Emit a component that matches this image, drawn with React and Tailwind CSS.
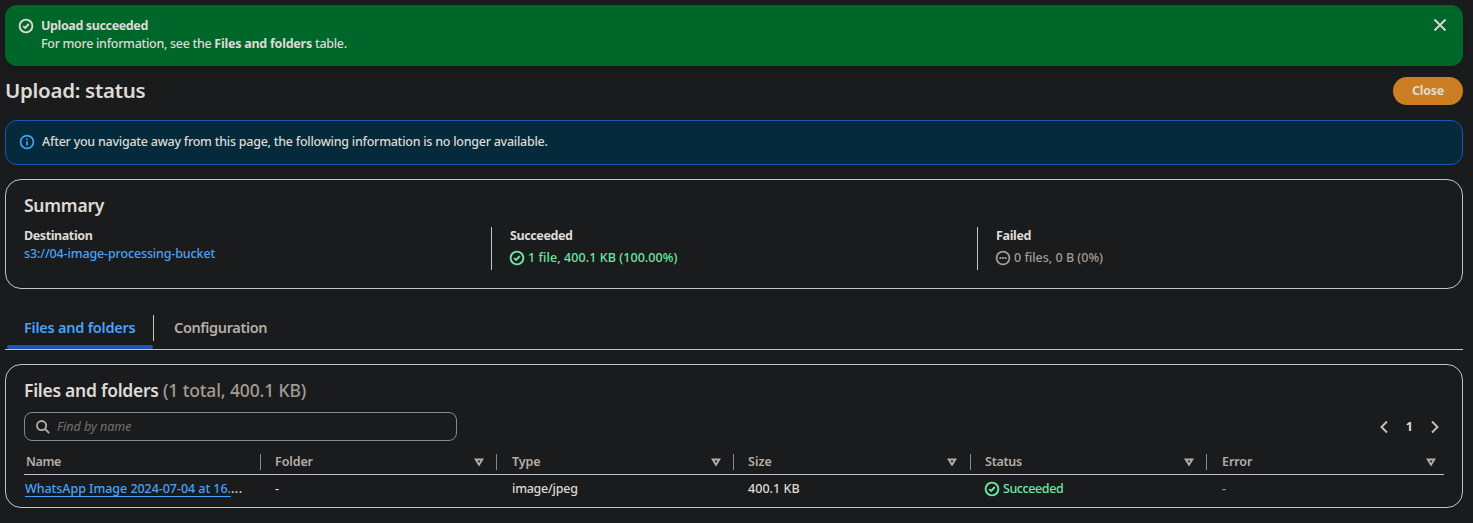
const CheckCircle = ({ className = '' }) => (
  <svg viewBox="0 0 16 16" className={`size-4 shrink-0 ${className}`} fill="none" stroke="currentColor" strokeWidth="1.9">
    <circle cx="8" cy="8" r="6.4" />
    <path d="m5.1 8.1 2.1 1.9 3.6-4" />
  </svg>
);

const InfoCircle = () => (
  <svg viewBox="0 0 16 16" className="size-4 shrink-0" fill="none" stroke="currentColor" strokeWidth="1.7">
    <circle cx="8" cy="8" r="6.4" />
    <path d="M8 7.2V11.4M8 4.6v1.5" />
  </svg>
);

const PendingCircle = () => (
  <svg viewBox="0 0 16 16" className="size-4 shrink-0" fill="none" stroke="currentColor" strokeWidth="1.8">
    <circle cx="8" cy="8" r="6.4" />
    <path d="M4.5 8h1.8M7.1 8h1.8M9.7 8h1.8" />
  </svg>
);

const SortIcon = () => (
  <svg viewBox="0 0 10 9" className="h-[9px] w-2.5 shrink-0" fill="none" stroke="currentColor" strokeWidth="1.9">
    <path d="M1.7 1.5h6.6L5 6.8z" />
  </svg>
);

const Chevron = ({ d }) => (
  <svg viewBox="0 0 8 14" className="h-3.5 w-2" fill="none" stroke="currentColor" strokeWidth="2">
    <path d={d} />
  </svg>
);

const columns = [
  { label: 'Name', cls: 'w-[236px] pl-0.5 tracking-[-0.4px]' },
  { label: 'Folder', cls: 'w-[236px] pl-3.5 pr-3 tracking-[-0.1px]', sort: true },
  { label: 'Type', cls: 'w-[237px] pl-[15px] pr-3 tracking-[-0.1px]', sort: true },
  { label: 'Size', cls: 'w-[237px] pl-3.5 pr-[13px]', sort: true },
  { label: 'Status', cls: 'w-[236px] pl-3.5 pr-3 tracking-[-0.25px]', sort: true },
  { label: 'Error', cls: 'w-[238px] pl-[15px] pr-2 tracking-[-0.1px]', sort: true },
];

export default function App() {
  return (
    <div className="h-[523px] w-[1473px] overflow-hidden bg-[#1a1b1d] pt-[5px] pr-2.5 pl-[5px] font-['Noto_Sans',sans-serif] text-[12.5px] leading-[18px] font-medium text-[#dedad5]">
      <div className="flex h-[61px] rounded-xl bg-[#00672b] pt-3 pr-4 pl-[13px] shadow-md">
        <CheckCircle className="mt-px" />
        <div className="ml-[7px] flex-1">
          <div className="font-bold tracking-[-0.38px]">Upload succeeded</div>
          <div className="tracking-[-0.3px]">
            For more information, see the <b className="font-bold tracking-[-0.24px]">Files and folders</b> table.
          </div>
        </div>
        <svg viewBox="0 0 14 14" className="mt-[1px] size-3.5" fill="none" stroke="currentColor" strokeWidth="1.8">
          <path d="m1.5 1.5 11 11M12.5 1.5l-11 11" />
        </svg>
      </div>

      <div className="mt-[11px] flex h-7 items-start justify-between">
        <h1 className="-mt-px text-[20.5px] leading-7 font-semibold tracking-[-0.29px]">Upload: status</h1>
        <button className="flex h-7 w-[70px] items-center justify-center rounded-full bg-[#cb7e22] font-bold tracking-[-0.3px]">
          Close
        </button>
      </div>

      <div className="mt-[15px] flex h-[45px] items-start rounded-xl border border-[#1b56b5] bg-[#042a3b] pt-3 pl-[13px]">
        <span className="mt-px text-[#42a0f5]"><InfoCircle /></span>
        <p className="ml-[7px] tracking-[-0.252px]">
          After you navigate away from this page, the following information is no longer available.
        </p>
      </div>

      <section className="mt-3.5 h-[110px] rounded-2xl border border-[#c3c5ca] pt-3.5 pl-[18px]">
        <h2 className="text-[17.5px] leading-[22px] font-semibold tracking-[-0.25px]">Summary</h2>
        <div className="mt-[11px] flex h-[43px]">
          <div className="w-[467px]">
            <div className="font-bold tracking-[-0.4px]">Destination</div>
            <a className="block tracking-[-0.14px] text-[#49a2f8]">s3://04-image-processing-bucket</a>
          </div>
          <div className="w-[486px] border-l border-[#c3c5ca] pl-[18px]">
            <div className="font-bold tracking-[-0.4px]">Succeeded</div>
            <div className="mt-1 flex items-center gap-[3px] tracking-[0.07px] text-[#6ee7a2]">
              <CheckCircle className="-mt-px -ml-px" />
              1 file, 400.1 KB (100.00%)
            </div>
          </div>
          <div className="border-l border-[#c3c5ca] pl-[18px]">
            <div className="font-bold tracking-[-0.35px]">Failed</div>
            <div className="mt-1 flex items-center gap-[3px] text-[#a39c92]">
              <span className="-mt-px -ml-px"><PendingCircle /></span>
              0 files, 0 B (0%)
            </div>
          </div>
        </div>
      </section>

      <nav className="mt-[26px] flex h-[35px] border-b border-[#c3c5ca] text-[14.5px] font-semibold">
        <div className="ml-0.5 flex w-[146px] flex-col justify-between text-[#49a2f8]">
          <span className="mt-[3px] pl-[17px] tracking-[-0.23px]">Files and folders</span>
          <span className="h-1 rounded-[2px] bg-[#1e55b8]" />
        </div>
        <div className="h-[26px] border-l border-[#c3c5ca] pt-[3px] pl-5 tracking-[-0.37px] text-[#b5aea5]">Configuration</div>
      </nav>

      <section className="mt-3.5 h-36 rounded-2xl border border-[#c3c5ca] px-[18px] pt-[13px]">
        <h2 className="text-[17.5px] leading-6 font-semibold tracking-[-0.27px] whitespace-pre">
          Files and folders <span className="font-medium tracking-[-0.13px] text-[#a39c92]">(1 total, 400.1 KB)</span>
        </h2>
        <div className="mt-2.5 flex items-center justify-between">
          <div className="flex h-[29px] w-[433px] items-center rounded-lg border border-[#858992] pl-[11px]">
            <svg viewBox="0 0 14 14" className="size-3.5 text-[#b5aea5]" fill="none" stroke="currentColor" strokeWidth="1.8">
              <circle cx="5.6" cy="5.6" r="4.6" />
              <path d="m9 9 4.2 4.2" />
            </svg>
            <span className="ml-[7px] font-normal text-[#77726b] italic">Find by name</span>
          </div>
          <div className="flex items-center pr-[5px] text-[#c4bdb4]">
            <Chevron d="M7 1.5 1.5 7 7 12.5" />
            <span className="mr-[18px] ml-[18px] font-bold text-[#dedad5]">1</span>
            <Chevron d="M1 1.5 6.5 7 1 12.5" />
          </div>
        </div>
        <div className="mt-[13px] flex h-[21px] border-b border-[#c3c5ca] text-[#b5aea5]">
          {columns.map((c, i) => (
            <div
              key={c.label}
              className={`flex h-4 items-center justify-between font-semibold ${c.cls} ${i ? 'border-l border-[#858992]' : ''}`}
            >
              {c.label}
              {c.sort && <SortIcon />}
            </div>
          ))}
        </div>
        <div className="mt-[5px] flex">
          <div className="w-[236px] pl-px whitespace-nowrap">
            <a className="tracking-[-0.05px] text-[#49a2f8] underline underline-offset-[3px]">WhatsApp Image 2024-07-04 at 16.</a>
            <span className="tracking-[0.5px]">...</span>
          </div>
          <div className="w-[236px] pl-[15px]">-</div>
          <div className="w-[237px] pl-4 tracking-[-0.25px]">image/jpeg</div>
          <div className="w-[237px] pl-[15px] tracking-[0.05px]">400.1 KB</div>
          <div className="flex w-[236px] items-center gap-[3px] pl-3.5 tracking-[-0.42px] text-[#6ee7a2]">
            <CheckCircle />
            Succeeded
          </div>
          <div className="pl-4 text-[#a39c92]">-</div>
        </div>
      </section>
    </div>
  );
}
